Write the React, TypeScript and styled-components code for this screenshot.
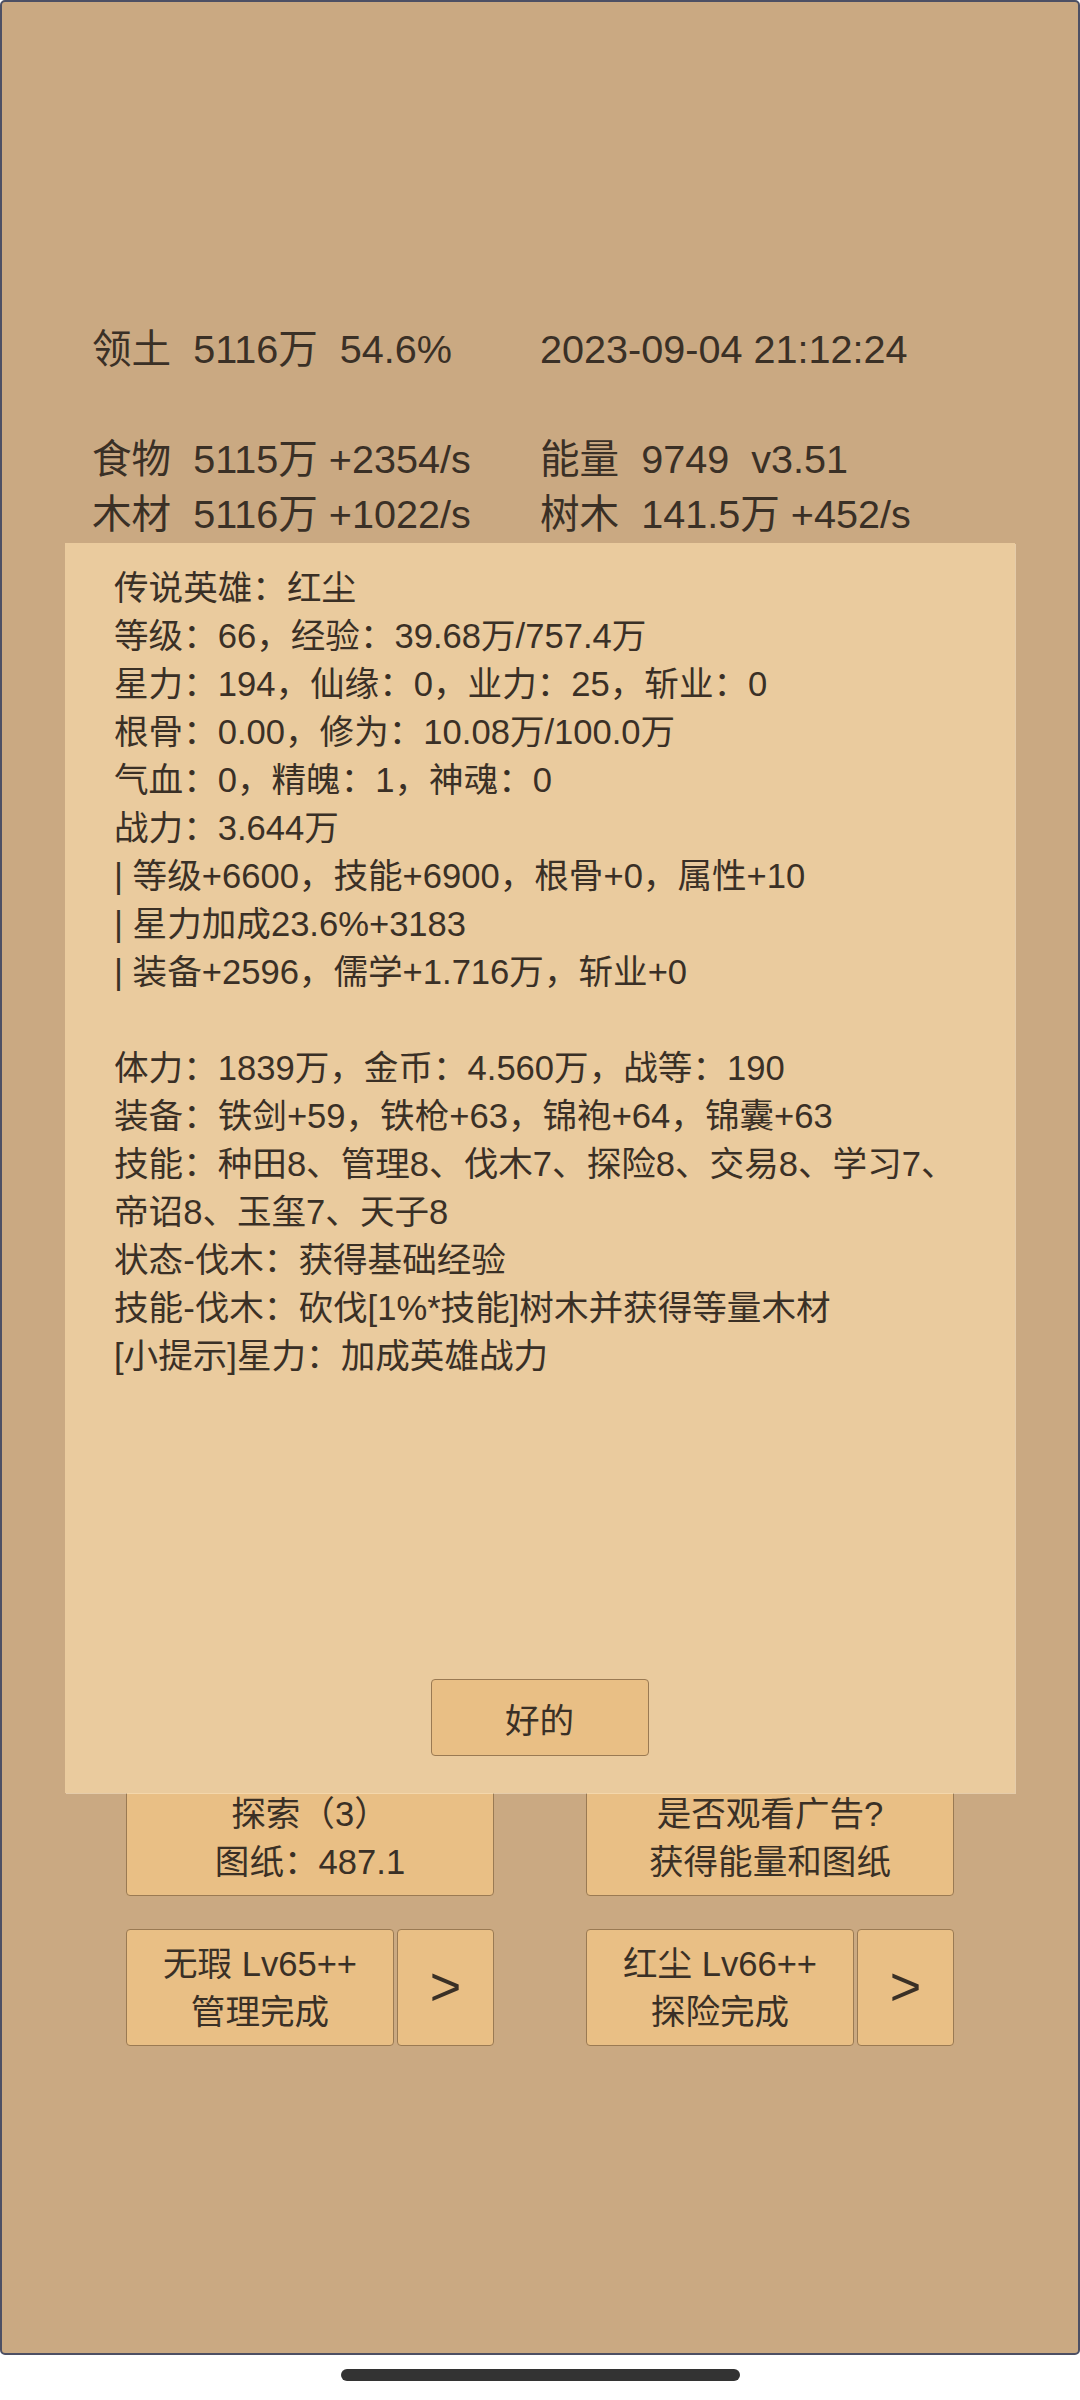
import React from "react";
import styled, { createGlobalStyle } from "styled-components";

const Global = createGlobalStyle`
  html, body { margin: 0; padding: 0; background: #ffffff; }
  body { font-family: "Liberation Sans", "Noto Sans CJK SC", sans-serif; }
  * { box-sizing: border-box; }
`;

const Screen = styled.div`
  width: 1080px;
  height: 2400px;
  display: flex;
  flex-direction: column;
  align-items: center;
  background: #ffffff;
`;

const Frame = styled.div`
  position: relative;
  width: 1080px;
  height: 2355px;
  border: 2px solid #4d5064;
  border-radius: 5px;
  background: #caa982;
  color: #3a3026;
  font-family: "Liberation Sans", "Noto Sans CJK SC", sans-serif;
  overflow: hidden;
`;

const Stats = styled.div`
  padding: 320px 0 0 90px;
  display: grid;
  grid-template-columns: 448px auto;
  font-size: 39.6px;
  line-height: 55px;
  white-space: pre;
`;

const StatCell = styled.div<{ $gapAbove?: boolean }>`
  margin-top: ${(p) => (p.$gapAbove ? "55px" : "0")};
`;

const ActionGrid = styled.div`
  margin-top: 1237px;
  padding: 0 124px;
  display: grid;
  grid-template-columns: 368px 368px;
  column-gap: 92px;
  row-gap: 33px;
`;

const Btn = styled.div`
  height: 117px;
  display: flex;
  flex-direction: column;
  align-items: center;
  justify-content: center;
  text-align: center;
  background: #e9bf85;
  border: 1.5px solid #9a7a53;
  border-radius: 4px;
  font-size: 34.6px;
  line-height: 48px;
  color: #3a3026;
  white-space: pre;
`;

const HeroPair = styled.div`
  display: grid;
  grid-template-columns: 1fr 97px;
  column-gap: 3px;
`;

const ArrowBtn = styled(Btn)`
  font-size: 54px;
  padding-bottom: 4px;
`;

const Dialog = styled.div`
  position: absolute;
  left: 63px;
  top: 541px;
  width: 950px;
  height: 1250px;
  background: #eacb9e;
  box-shadow: 1px 1px 0 rgba(255, 240, 210, 0.5);
  padding: 21px 50px 37px 49px;
  display: flex;
  flex-direction: column;
`;

const InfoLine = styled.div<{ $gapAbove?: boolean }>`
  font-size: 34.6px;
  line-height: 48px;
  white-space: pre;
  margin-top: ${(p) => (p.$gapAbove ? "48px" : "0")};
`;

const OkButton = styled.div`
  margin: auto auto 0;
  width: 218px;
  height: 77px;
  display: flex;
  align-items: center;
  justify-content: center;
  background: #e9bf85;
  border: 1.5px solid #9a7a53;
  border-radius: 4px;
  font-size: 34.6px;
  color: #3a3026;
`;

const HomeBar = styled.div`
  margin-top: 14px;
  width: 399px;
  height: 12px;
  border-radius: 6px;
  background: #333333;
`;

const heroLines = [
  "传说英雄：红尘",
  "等级：66，经验：39.68万/757.4万",
  "星力：194，仙缘：0，业力：25，斩业：0",
  "根骨：0.00，修为：10.08万/100.0万",
  "气血：0，精魄：1，神魂：0",
  "战力：3.644万",
  "| 等级+6600，技能+6900，根骨+0，属性+10",
  "| 星力加成23.6%+3183",
  "| 装备+2596，儒学+1.716万，斩业+0",
];

const moreLines = [
  "体力：1839万，金币：4.560万，战等：190",
  "装备：铁剑+59，铁枪+63，锦袍+64，锦囊+63",
  "技能：种田8、管理8、伐木7、探险8、交易8、学习7、",
  "帝诏8、玉玺7、天子8",
  "状态-伐木：获得基础经验",
  "技能-伐木：砍伐[1%*技能]树木并获得等量木材",
  "[小提示]星力：加成英雄战力",
];

export default function App() {
  return (
    <>
      <Global />
      <Screen>
        <Frame>
          <Stats>
            <StatCell>{"领土  5116万  54.6%"}</StatCell>
            <StatCell>{"2023-09-04 21:12:24"}</StatCell>
            <StatCell $gapAbove>{"食物  5115万 +2354/s"}</StatCell>
            <StatCell $gapAbove>{"能量  9749  v3.51"}</StatCell>
            <StatCell>{"木材  5116万 +1022/s"}</StatCell>
            <StatCell>{"树木  141.5万 +452/s"}</StatCell>
          </Stats>
          <ActionGrid>
            <Btn>{"探索（3）\n图纸：487.1"}</Btn>
            <Btn>{"是否观看广告?\n获得能量和图纸"}</Btn>
            <HeroPair>
              <Btn>{"无瑕 Lv65++\n管理完成"}</Btn>
              <ArrowBtn>&gt;</ArrowBtn>
            </HeroPair>
            <HeroPair>
              <Btn>{"红尘 Lv66++\n探险完成"}</Btn>
              <ArrowBtn>&gt;</ArrowBtn>
            </HeroPair>
          </ActionGrid>
          <Dialog>
            {heroLines.map((l) => (
              <InfoLine key={l}>{l}</InfoLine>
            ))}
            {moreLines.map((l, i) => (
              <InfoLine key={l} $gapAbove={i === 0}>
                {l}
              </InfoLine>
            ))}
            <OkButton>好的</OkButton>
          </Dialog>
        </Frame>
        <HomeBar />
      </Screen>
    </>
  );
}
